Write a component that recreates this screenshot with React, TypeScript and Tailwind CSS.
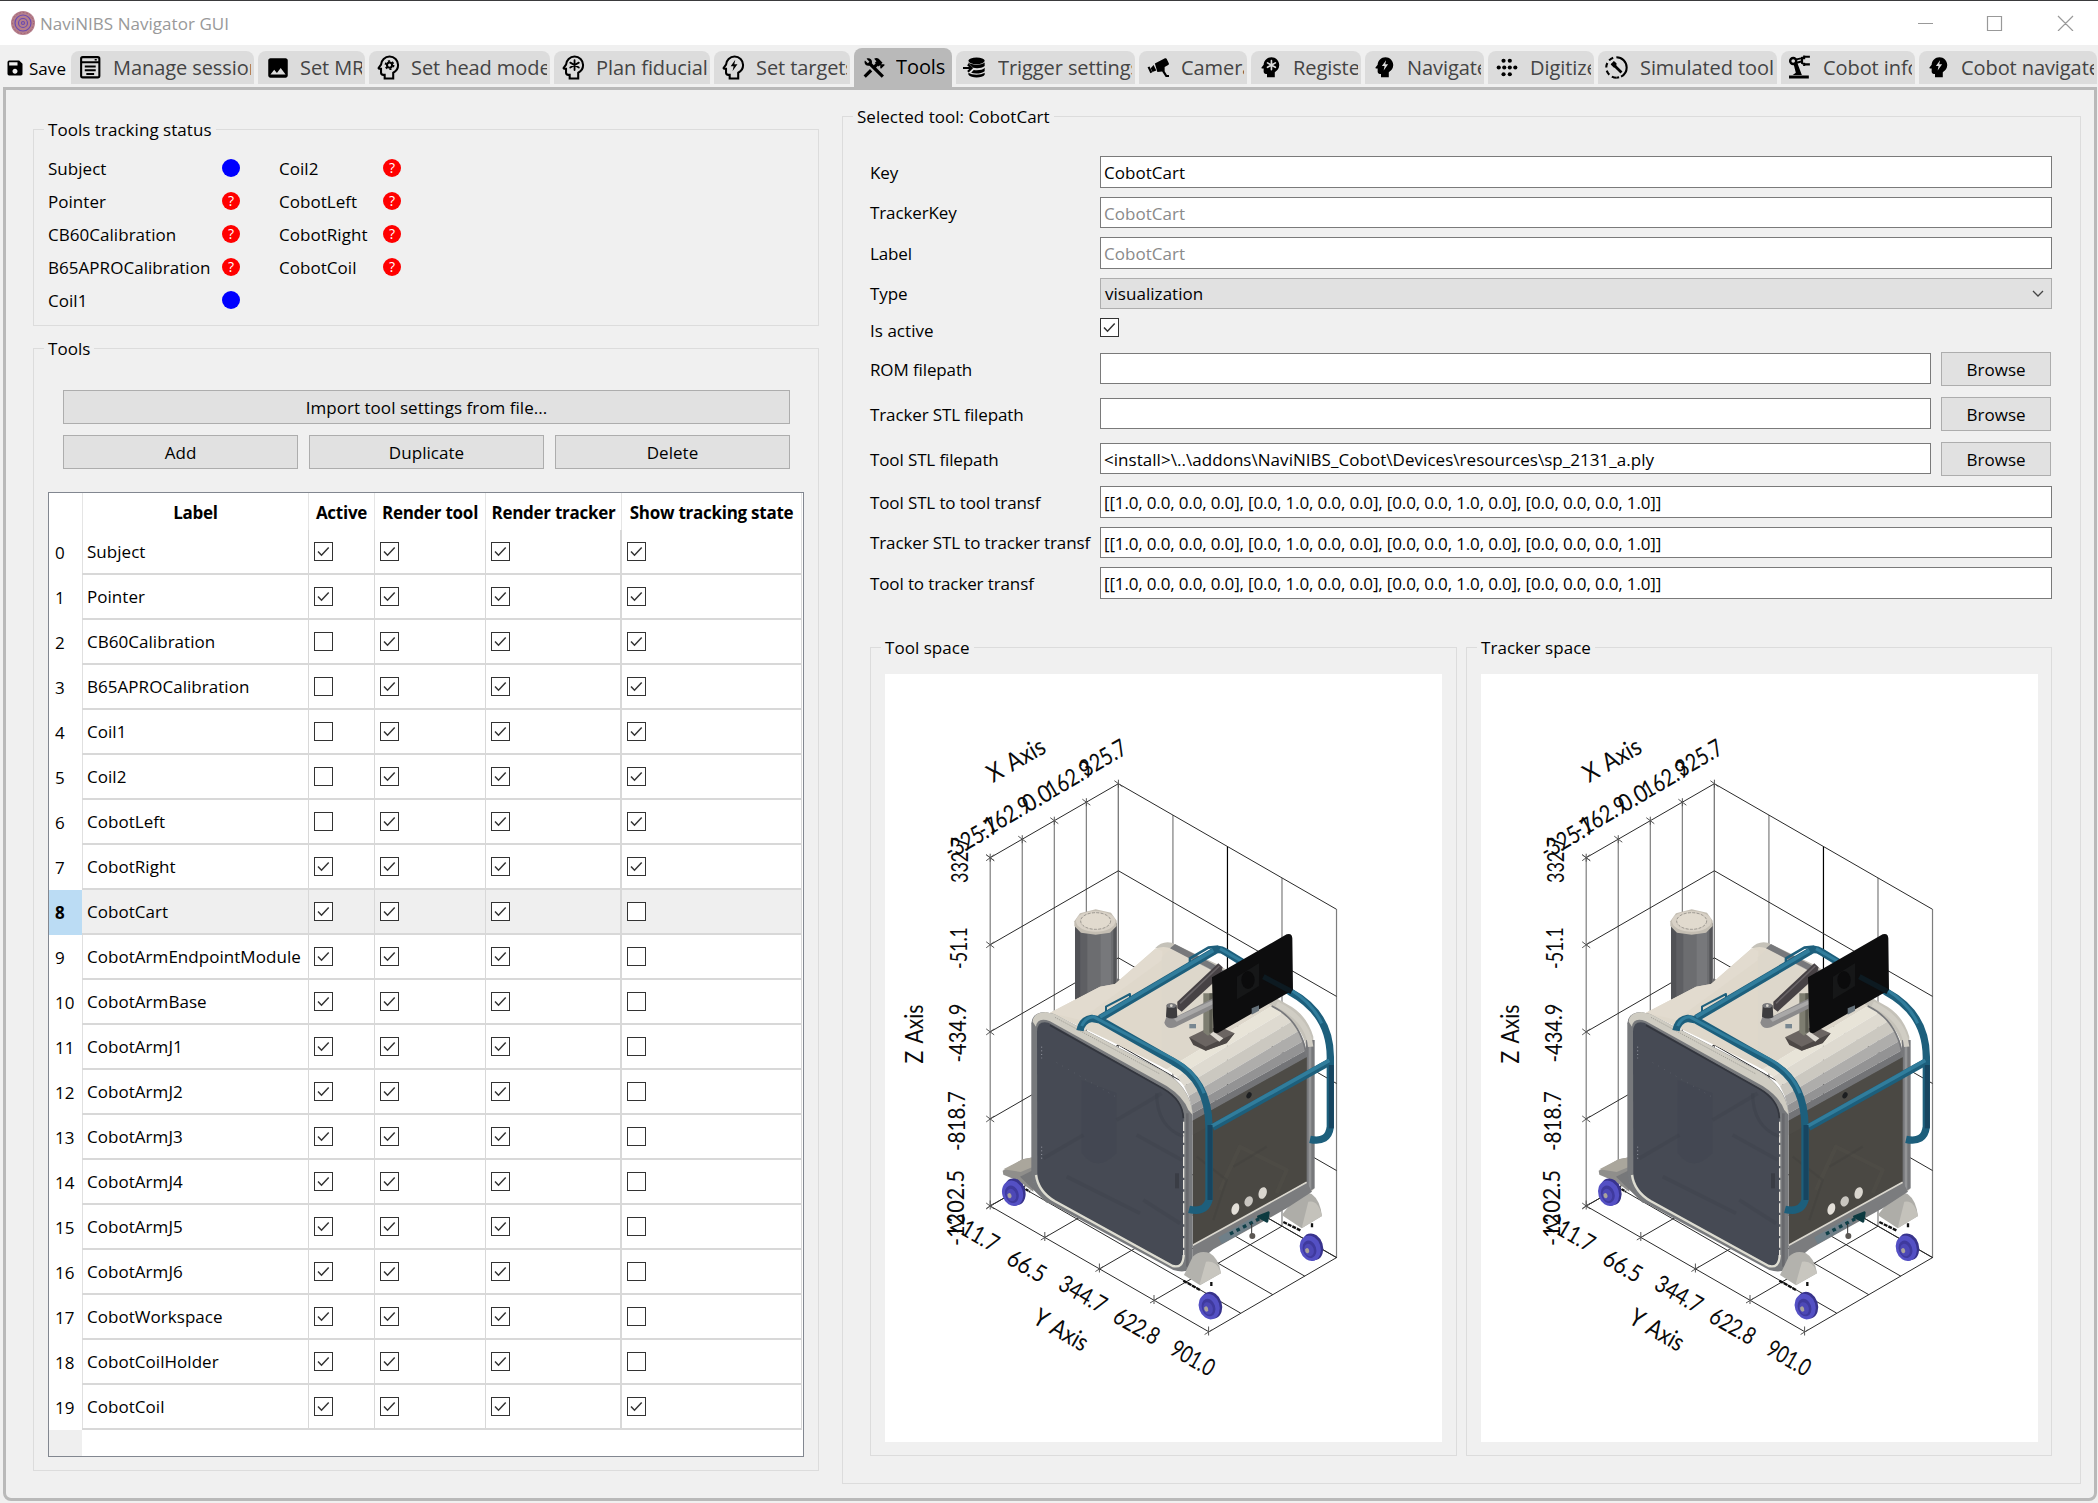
import React from "react";
import { MdImage, MdSave } from "react-icons/md";

const HEAD =
  "M13 3C9.23 3 6.19 5.95 6 9.66L4.08 12.19C3.84 12.5 4.08 13 4.5 13H6V16C6 17.11 6.89 18 8 18H9V21H16V16.31C18.37 15.19 20 12.8 20 10C20 6.14 16.88 3 13 3Z";
const BOLT = "M13.6 5.6L9.8 10.9H12.2L11.4 14.8L15.4 9.3H12.8Z";

type IconKind =
  | "form" | "image" | "headCog" | "headFlake" | "headFlash" | "tools" | "trigger"
  | "camera" | "headFlakeSolid" | "headFlashSolid" | "dots" | "simulated" | "robot";

function Star({ color }: { color: string }) {
  return (
    <g stroke={color} strokeWidth={1.5} strokeLinecap="round">
      <path d="M13 6v8M9.5 8l7 4M9.5 12l7-4" />
    </g>
  );
}

function TabIcon({ kind }: { kind: IconKind }) {
  if (kind === "image") return <MdImage className="size-[26px] text-black" />;
  return (
    <svg viewBox="0 0 24 24" className="size-[25px] overflow-visible" fill="#000">
      {kind === "form" && (
        <g fill="none" stroke="#000" strokeWidth={2}>
          <rect x="3" y="2" width="17.500" height="19.500" rx="1.500" />
          <path d="M3 7h17.500M6.500 11h10.500M6.500 14.600h10.500M8 18.200h7.500" />
          <path d="M16 4.500h2" strokeWidth={1.400} />
        </g>
      )}
      {(kind === "headCog" || kind === "headFlake" || kind === "headFlash") && (
        <g transform="translate(-2.2 -2) scale(1.17)">
          <path d={HEAD} fill="none" stroke="#000" strokeWidth={1.700} />
          {kind === "headCog" && (
            <g fill="none" stroke="#000">
              <circle cx="13" cy="10" r="2.1" strokeWidth={1.700} />
              <circle cx="13" cy="10" r="3.4" strokeWidth={1.300} strokeDasharray="1.78 1.78" />
            </g>
          )}
          {kind === "headFlake" && <Star color="#000" />}
          {kind === "headFlash" && <path d={BOLT} />}
        </g>
      )}
      {kind === "headFlakeSolid" && (
        <g transform="translate(-1 -1) scale(1.07)">
          <path d={HEAD} />
          <Star color="#ddd" />
        </g>
      )}
      {kind === "headFlashSolid" && (
        <g transform="translate(-1 -1) scale(1.07)">
          <path d={HEAD} />
          <path d={BOLT} fill="#ddd" />
        </g>
      )}
      {kind === "tools" && (
        <path
          transform="translate(25 0) scale(-1.03 1.03)"
          d="M13.78 15.3L19.78 21.3L21.89 19.14L15.89 13.14L13.78 15.3M17.5 10.1C17.11 10.1 16.69 10.05 16.36 9.91L4.97 21.25L2.86 19.14L10.27 11.74L8.5 9.96L7.78 10.66L6.33 9.25V12.11L5.63 12.81L2.11 9.25L2.81 8.55H5.62L4.22 7.14L7.78 3.58C8.95 2.41 10.83 2.41 12 3.58L9.89 5.74L11.3 7.14L10.59 7.85L12.38 9.63L14.2 7.75C14.06 7.42 14 7 14 6.63C14 4.66 15.56 3.11 17.5 3.11C18.09 3.11 18.61 3.25 19.08 3.53L16.41 6.2L17.91 7.7L20.58 5.03C20.86 5.5 21 6 21 6.63C21 8.55 19.45 10.1 17.5 10.1Z"
        />
      )}
      {kind === "trigger" && (
        <g transform="translate(-1.500 0)">
          <ellipse cx="14.500" cy="5.600" rx="7.800" ry="3.300" />
          <path d="M22.300 7.200v3.300c-2.500 2.300-7.500 2.500-11 1.800l-3.200-3.300-1.400-.8v-1c2.500 2.600 12 3 15.600 0z" />
          <path d="M22.300 12.200v3.300c-3 2.500-9 2.700-13 1.600l2.500-2.700c4 .6 8.500 0 10.500-2.200z" />
          <path d="M22.300 17v2c-2 3.400-13 3.700-15.600 0v-2c3.500 2.500 12 2.500 15.600 0z" />
          <path d="M1.500 12.500h8M6.200 9l3.600 3.500L6.200 16" fill="none" stroke="#000" strokeWidth={2.100} />
        </g>
      )}
      {kind === "camera" && (
        <g>
          <path d="M8.500 8.200L18.200 3.200c.8-.4 1.400-.1 1.700.6l2 4.200c.3.700 0 1.300-.6 1.600l-3.400 1.800v4.200l2.200 3.600h2v1.900h-3.200l-3.400-5.200-4.600.4z" />
          <path d="M7.300 9.600l2.600 5.200-3.700 1.600-1.700-3.600z" />
          <path d="M1.500 11.800l1.900-.8 2.700 5.500-1.900 1z" />
        </g>
      )}
      {kind === "dots" && (
        <g transform="translate(0 .5)">
          {[[8.200, 5], [14.200, 5], [3.600, 11.500], [8.900, 11.500], [14.200, 11.500], [19.500, 11.500], [8.200, 18], [14.200, 18]].map(([x, y]) => (
            <circle key={`${x}-${y}`} cx={x} cy={y} r={2} />
          ))}
        </g>
      )}
      {kind === "simulated" && (
        <g fill="none" stroke="#000" transform="translate(-1 0)">
          <path d="M12 2.200a9.800 9.800 0 0 1 0 19.600" strokeWidth={2} strokeDasharray="26 2 5 0" />
          <path d="M12 21.800a9.800 9.800 0 0 1 0-19.600" strokeWidth={2} strokeDasharray="4.600 3" />
          <path d="M10.500 10.500l6.300 6.300" strokeWidth={2.600} />
          <path d="M7 8.500l2.800 2.800a3 3 0 0 0 1.500-3L9 6.300" fill="#000" strokeWidth={1.600} />
        </g>
      )}
      {kind === "robot" && (
        <g transform="translate(-1 -.5)">
          <path d="M2 20.200h19v2.800H2z" />
          <path d="M5.500 19.800l3-2.200L6.300 9l3.500-1.200 4.500 12z" />
          <circle cx="6" cy="6.300" r="2.900" fill="none" stroke="#000" strokeWidth={2.300} />
          <path d="M8 5l5.500-1.300M8.500 8.200l6-1.700" stroke="#000" strokeWidth={1.800} />
          <path d="M22 2.200h-4.500l-3 1v5l3 1.300H22M16.500 1v3.500M16.500 8v3" stroke="#000" strokeWidth={2} fill="none" />
        </g>
      )}
    </svg>
  );
}

const TABS: { label: string; icon: IconKind; w: string; active?: boolean }[] = [
  { label: "Manage session", icon: "form", w: "w-[183px]" },
  { label: "Set MRI", icon: "image", w: "w-[107px]" },
  { label: "Set head model", icon: "headCog", w: "w-[181px]" },
  { label: "Plan fiducials", icon: "headFlake", w: "w-[156px]" },
  { label: "Set targets", icon: "headFlash", w: "w-[136px]" },
  { label: "Tools", icon: "tools", w: "w-[98px]", active: true },
  { label: "Trigger settings", icon: "trigger", w: "w-[179px]" },
  { label: "Cameras", icon: "camera", w: "w-[108px]" },
  { label: "Register", icon: "headFlakeSolid", w: "w-[110px]" },
  { label: "Navigate", icon: "headFlashSolid", w: "w-[119px]" },
  { label: "Digitize", icon: "dots", w: "w-[106px]" },
  { label: "Simulated tools", icon: "simulated", w: "w-[179px]" },
  { label: "Cobot info", icon: "robot", w: "w-[134px]" },
  { label: "Cobot navigate", icon: "headFlashSolid", w: "w-[178px]" },
];

function Group({ title, className, children }: { title: string; className: string; children: React.ReactNode }) {
  return (
    <section className={`relative border border-[#dcdcdc] ${className}`}>
      <h2 className="absolute -top-3 left-[10px] bg-[#f0f0f0] px-1 leading-6 whitespace-nowrap">{title}</h2>
      {children}
    </section>
  );
}

function Check({ on }: { on: boolean }) {
  return (
    <span className="flex size-[19px] shrink-0 items-center justify-center border border-[#333] bg-white">
      {on && (
        <svg viewBox="0 0 17 17" className="size-[17px]" fill="none" stroke="#333" strokeWidth={1.500}>
          <path d="M3 8.500l3.500 3.700L13.700 4.500" />
        </svg>
      )}
    </span>
  );
}

function Status({ name, ok }: { name: string; ok: boolean }) {
  return (
    <div className="flex h-[33px] items-center justify-between">
      <span>{name}</span>
      {ok ? (
        <span className="mb-px size-[18px] rounded-full bg-[#0000ff]" />
      ) : (
        <span className="mb-px flex size-[18px] items-center justify-center rounded-full bg-[#ff0000] text-[14px] leading-none text-white">?</span>
      )}
    </div>
  );
}

function Button({ children, className }: { children: React.ReactNode; className: string }) {
  return (
    <button className={`flex h-[34px] items-center justify-center border border-[#adadad] bg-[#e1e1e1] pt-px ${className}`}>
      {children}
    </button>
  );
}

const ROWS: [string, number, number][] = [
  ["Subject", 1, 1], ["Pointer", 1, 1], ["CB60Calibration", 0, 1], ["B65APROCalibration", 0, 1],
  ["Coil1", 0, 1], ["Coil2", 0, 1], ["CobotLeft", 0, 1], ["CobotRight", 1, 1], ["CobotCart", 1, 0],
  ["CobotArmEndpointModule", 1, 0], ["CobotArmBase", 1, 0], ["CobotArmJ1", 1, 0], ["CobotArmJ2", 1, 0],
  ["CobotArmJ3", 1, 0], ["CobotArmJ4", 1, 0], ["CobotArmJ5", 1, 0], ["CobotArmJ6", 1, 0],
  ["CobotWorkspace", 1, 0], ["CobotCoilHolder", 1, 0], ["CobotCoil", 1, 1],
];

const COLS = "grid grid-cols-[34px_226px_66px_111px_136px_180px]";

function ToolsTable() {
  return (
    <div className="flex h-[965px] w-[756px] flex-col border border-[#828790] bg-white">
      <div className={`${COLS} h-[37px] font-bold tracking-[-0.26px]`}>
        {["", "Label", "Active", "Render tool", "Render tracker", "Show tracking state"].map((h) => (
          <div key={h} className="flex items-center justify-center border-r border-[#e5e5e5] pt-0.5 whitespace-nowrap">{h}</div>
        ))}
      </div>
      {ROWS.map(([name, active, show], i) => {
        const sel = i === 8;
        const cell = `flex items-center border-r border-b-2 border-[#d8d8d8] pl-[5px] ${sel ? "bg-[#efefef]" : ""}`;
        return (
          <div key={name} className={`${COLS} h-[45px]`}>
            <div className={`flex items-center border-r border-[#e0e0e0] pl-1.5 ${sel ? "bg-[#bbdcf4] font-bold" : ""}`}>{i}</div>
            <div className={`${cell} -ml-px`}>{name}</div>
            <div className={cell}><Check on={!!active} /></div>
            <div className={cell}><Check on /></div>
            <div className={`${cell} border-r-2`}><Check on /></div>
            <div className={cell}><Check on={!!show} /></div>
          </div>
        );
      })}
      <div className="w-[33px] flex-1 bg-[#efefef]" />
    </div>
  );
}

function Row({ label, className, children }: { label: string; className: string; children: React.ReactNode }) {
  return (
    <div className={`flex items-center ${className}`}>
      <label className="w-[230px] shrink-0 pt-px tracking-[-0.12px] whitespace-nowrap">{label}</label>
      {children}
    </div>
  );
}

function Field({ value, className, muted }: { value: string; className: string; muted?: boolean }) {
  return (
    <div className={`flex items-center border border-[#7a7a7a] bg-white pt-0.5 pl-[3px] whitespace-nowrap ${muted ? "text-[#8a8a8a]" : ""} ${className}`}>
      {value}
    </div>
  );
}

const ID = "[[1.0, 0.0, 0.0, 0.0], [0.0, 1.0, 0.0, 0.0], [0.0, 0.0, 1.0, 0.0], [0.0, 0.0, 0.0, 1.0]]";

/* Tick and axis captions: text, centre x, centre y, rotation, length, size */
const CAPTIONS: [string, number, number, number, number, number][] = [
  ["X Axis", 131, 86, -30, 63, 25],
  ["325.7", 218, 84, -30, 50, 24],
  ["162.9", 184, 105, -30, 50, 24],
  ["0.0", 152, 124, -30, 30, 24],
  ["-162.9", 119, 143, -30, 58, 24],
  ["-325.7", 86, 164, -30, 58, 24],
  ["332.7", 74, 186, -90, 46, 24],
  ["-51.1", 73, 274, -90, 42, 24],
  ["-434.9", 72, 359, -90, 59, 24],
  ["-818.7", 71, 447, -90, 60, 24],
  ["-1202.5", 70, 534, -90, 76, 24],
  ["Z Axis", 29, 360, -90, 59, 25],
  ["-211.7", 87, 557, 30, 58, 24],
  ["66.5", 142, 592, 30, 41, 24],
  ["344.7", 198, 620, 30, 51, 24],
  ["622.8", 252, 652, 30, 49, 24],
  ["901.0", 308, 684, 30, 47, 24],
  ["Y Axis", 176, 656, 30, 59, 25],
];

const Q = [0, 1, 2, 3, 4];

function Axes() {
  const lx = (k: number) => 105.200 + k * 32.050;
  const ly = (k: number) => 183.700 - k * 18.500;
  const rx = (k: number) => 233.400 + k * 54.530;
  const ry = (k: number) => 109.700 + k * 31.400;
  return (
    <g>
      <g stroke="#7d7d7d" strokeWidth={1.200}>
        {Q.map((k) => <line key={k} x1={lx(k)} y1={ly(k)} x2={lx(k)} y2={ly(k) + 348.300} />)}
        {Q.map((k) => <line key={k} x1={rx(k)} y1={ry(k)} x2={rx(k)} y2={ry(k) + 348.300} stroke={k === 2 ? "#000" : "#7d7d7d"} />)}
      </g>
      <g stroke="#2a2a2a" strokeWidth={1}>
        {Q.map((k) => (
          <polyline key={k} fill="none" points={`105.2,${183.700 + k * 87.080} 233.4,${109.700 + k * 87.080} 451.5,${235.300 + k * 87.080}`} />
        ))}
        {Q.map((k) => <line key={k} x1={lx(k)} y1={ly(k) + 348.300} x2={lx(k) + 218.500} y2={ly(k) + 474} />)}
        {Q.map((k) => <line key={k} x1={105.200 + k * 54.600} y1={532 + k * 31.500} x2={233.400 + k * 54.530} y2={458 + k * 31.400} />)}
      </g>
      <g stroke="#555" strokeWidth={1}>
        {Q.map((k) => <path key={k} d={`M${lx(k) - 4} ${ly(k) - 3}l8 6M${lx(k)} ${ly(k) - 4}v8`} />)}
        {Q.map((k) => <path key={k} d={`M101.200 ${180.700 + k * 87.080}l8 6m-8 0l8 -6`} />)}
        {Q.map((k) => <path key={k} d={`M${101.200 + k * 54.600} ${534.500 + k * 31.500}l8 -5m-4 -3v9`} />)}
      </g>
      <g fontFamily="Lato, sans-serif" fill="#0a0a0a" letterSpacing="0" wordSpacing="3">
        {CAPTIONS.map(([t, x, y, a, len, size]) => (
          <text key={t} transform={`translate(${x} ${y}) rotate(${a})`} y={8.500} textAnchor="middle" fontSize={size} textLength={len} lengthAdjust="spacingAndGlyphs">
            {t}
          </text>
        ))}
      </g>
    </g>
  );
}

function Wheel({ x, y }: { x: number; y: number }) {
  return (
    <g transform={`translate(${x} ${y}) rotate(-18)`}>
      <ellipse cx="5" cy="0" rx="31" ry="41" fill="#38338c" />
      <ellipse cx="-3" cy="2" rx="31" ry="39" fill="#5450c4" />
      <ellipse cx="-6" cy="4" rx="20" ry="27" fill="#3f3a9e" />
      <ellipse cx="-8" cy="6" rx="14" ry="19" fill="#4d48b6" />
      <ellipse cx="-14" cy="6" rx="6" ry="8" fill="#aaa39b" />
    </g>
  );
}

const TOP_EDGE: [number, number][] = [[500, 568], [530, 590], [552, 618], [566, 648], [574, 676], [578, 700], [578, 727]];
const BACK_EDGE: [number, number][] = [[815, 378], [848, 398], [876, 424], [897, 452], [911, 482], [919, 510], [921, 535]];
const BANDS = ["#e8e4d8", "#dedad0", "#cbc8c0", "#aeadab", "#939394", "#737477"];

function Cart() {
  return (
    <g transform="translate(115 206) scale(.33333)" strokeLinejoin="round">
      {/* rear post */}
      <path d="M225 128V370H350V128Z" fill="#6c6d70" />
      <path d="M225 128V370H242V128Z" fill="#515256" />
      <path d="M242 140V370H262V140Z" fill="#5e5f63" />
      <path d="M302 140V370H333V140Z" fill="#77787b" />
      <path d="M340 130V320H350V130Z" fill="#535457" />
      <path d="M223 124L240 100L287 88L333 98L350 122V138L330 158L287 164L243 158L223 138Z" fill="#c4beb3" />
      <ellipse cx="287" cy="124" rx="59" ry="31" fill="#d8d1c6" />
      <ellipse cx="287" cy="123" rx="45" ry="25" fill="#e1dace" stroke="#8e8a84" strokeWidth="2.500" strokeDasharray="9 4" />
      <path d="M350 295l12 5v16l-12 4z" fill="#6a6a6c" />

      {/* feet and casters */}
      <path d="M8 872L68 838L100 832V935L60 905L10 884Z" fill="#8f8e8b" />
      <path d="M10 868L68 838L100 832V860L62 876Z" fill="#aaa69c" />
      <path d="M60 890L100 870V905L130 950L160 972L140 968Z" fill="#77787a" />
      <path d="M35 905L90 935" stroke="#151515" strokeWidth="7" strokeDasharray="9 3" />
      <Wheel x={40} y={937} />
      <path d="M845 1005L890 950Q910 932 935 942Q960 960 966 1008L905 1045Z" fill="#aeada8" />
      <path d="M905 1045L925 965Q955 958 966 1008Z" fill="#c4c2bb" />
      <path d="M850 1026L903 1052M936 1030v14" stroke="#111" strokeWidth="7" strokeDasharray="12 3" />
      <Wheel x={933} y={1102} />

      {/* rear frame and shell */}
      <path d="M465 205Q485 182 515 188L650 252L860 372Q920 402 940 470V930L918 940V500Q905 440 850 405L640 275L500 205Z" fill="#c5c2b9" />
      <path d="M918 480H944V925L918 940Z" fill="#77787b" />
      <path d="M926 480H934V930H926Z" fill="#939496" />
      <path d="M150 398L300 320L345 312L466 206Q490 196 515 206L815 378L500 568Q330 480 150 398Z" fill="#dfd8cb" />
      <path d="M150 398L300 320L345 312L466 206L487 212V240L240 420Z" fill="#e2dbcf" />
      <path d="M485 232V560L500 568L815 378L640 276L515 206Z" fill="#ddd7cb" />
      <path d="M525 192L640 252L700 290L690 300L620 262L510 205Z" fill="#77787b" />
      {BANDS.map((c, i) => (
        <polygon key={c} fill={c} points={[TOP_EDGE[i], BACK_EDGE[i], BACK_EDGE[i + 1], TOP_EDGE[i + 1]].map((p) => p.join(",")).join(" ")} />
      ))}
      <path d="M815 378Q905 420 921 535" fill="none" stroke="#77787b" strokeWidth="5" />
      <path d="M830 372Q925 420 932 500" fill="none" stroke="#d0cdc4" strokeWidth="16" />

      {/* side panel */}
      <path d="M578 722L920 532V906L578 1098Z" fill="#4a4843" />
      <path d="M578 722L920 532V575L578 765Z" fill="#504e49" opacity=".6" />
      <path d="M660 930L720 800L860 870L830 940" fill="none" stroke="#55524c" strokeWidth="12" opacity=".3" />
      <path d="M590 830L680 900L640 1020M700 860L800 800" fill="none" stroke="#403f3b" strokeWidth="7" opacity=".35" />
      <path d="M578 1095L920 906L936 935L860 985L640 1108L578 1160Z" fill="#7b7c7e" />
      <path d="M578 1096L920 907" stroke="#dad7ce" strokeWidth="5" />
      <path d="M655 1072L760 1012L770 1032L665 1092Z" fill="#6f7f88" />
      <path d="M690 1062L780 1015" stroke="#0f3f48" strokeWidth="10" strokeDasharray="11 11" />
      <path d="M775 1010l30 -12l-4 26z" fill="#0d3a40" stroke="#0d3a40" strokeWidth="8" />
      <path d="M755 1030V1062" stroke="#333" strokeWidth="3" />
      <circle cx="757" cy="1068" r="9" fill="#5b5753" />
      <ellipse cx="706" cy="987" rx="11" ry="18" transform="rotate(18 706 987)" fill="#e3dfd8" />
      <ellipse cx="746" cy="964" rx="12" ry="16" transform="rotate(25 746 964)" fill="#c9c6c0" />
      <ellipse cx="788" cy="939" rx="12" ry="18" transform="rotate(18 788 939)" fill="#dad6cf" />
      <ellipse cx="747" cy="646" rx="7" ry="10" transform="rotate(30 747 646)" fill="#1d1f21" />

      {/* front frame and door */}
      <path d="M94 430Q96 398 135 396L162 402L490 572Q570 620 578 700V1160Q560 1182 520 1170L150 970Q100 940 94 880Z" fill="#77797c" />
      <path d="M98 425Q100 397 137 396L165 403L490 574Q572 622 578 705L565 690Q550 650 500 618L150 424Q112 410 108 440Z" fill="#cfccc2" />
      <path d="M165 412L480 582" stroke="#8e8c87" strokeWidth="2" strokeDasharray="4 3" />
      <path d="M562 700V1160" stroke="#68696d" strokeWidth="8" />
      <path d="M111 455Q112 420 145 428L490 625Q550 660 551 715V1135Q546 1166 518 1155L165 962Q116 930 112 880Z" fill="#464a54" />
      <path d="M150 436L490 626Q549 660 550 715" fill="none" stroke="#33363e" strokeWidth="5" />
      <path d="M108 885Q115 935 165 964L518 1158Q550 1166 551 1125" fill="none" stroke="#deddd2" strokeWidth="7" />
      <path d="M551 725V1130" stroke="#e4e1da" strokeWidth="4" strokeDasharray="28 7" />
      <path d="M245 600V820Q290 880 350 820V640Z" fill="#41454f" opacity=".45" />
      <path d="M130 835L250 765M350 720L485 640M200 890L420 1000M410 765L545 840M430 960L540 1030" stroke="#3e424b" strokeWidth="11" opacity=".4" />
      <path d="M470 640Q470 740 550 770" fill="none" stroke="#3c4049" strokeWidth="9" opacity=".5" />
      <path d="M525 880h12v45h-12z" fill="#3a3d45" />
      <path d="M125 500v35M125 800v40" stroke="#999ca4" strokeWidth="3" strokeDasharray="3 8" />
      <path d="M170 548L350 652" stroke="#6b6f78" strokeWidth="2" strokeDasharray="2 18" />

      {/* front caster */}
      <path d="M552 1185L578 1130Q600 1108 630 1120Q656 1135 663 1180L600 1216Z" fill="#b3b2ad" />
      <path d="M598 1216L618 1145Q652 1140 663 1180Z" fill="#c8c6bf" />
      <path d="M550 1202L600 1230M634 1206v13" stroke="#111" strokeWidth="7" strokeDasharray="12 3" />
      <Wheel x={630} y={1277} />

      {/* monitor arm and base */}
      <path d="M567 472L612 450L660 440L704 460L680 488L617 512Z" fill="#6b6562" />
      <path d="M567 472L617 500L704 460L680 490L617 512L580 495Z" fill="#4d4846" />
      <path d="M610 340h28v115l-14 12l-14 -10z" fill="#7d7d70" />
      <path d="M628 340h10v118h-10z" fill="#5c5c52" />
      <path d="M640 455l30 20l-12 10l-28 -22z" fill="#dcd8d0" />
      <path d="M500 408L525 412L640 355V385L525 442Q500 450 493 428Z" fill="#8b8a8b" />
      <path d="M520 415L640 360V372L530 425Z" fill="#a9a8a8" />
      <path d="M500 375Q514 366 530 376L532 412Q514 420 498 410Z" fill="#3d3c3e" />
      <ellipse cx="514" cy="377" rx="14" ry="7" fill="#77777a" />
      <circle cx="514" cy="377" r="4" fill="#dcd8d0" />
      <path d="M532 365L655 250L668 262L660 290L545 395L532 385Z" fill="#474245" />
      <path d="M540 370L658 258" stroke="#686366" strokeWidth="5" />
      <path d="M568 432h20v13h-20z" fill="#788791" />

      {/* hand rails */}
      <g fill="none" strokeLinecap="butt">
        <g stroke="#1d5f7c">
          <path d="M318 400V380L390 342V362" strokeWidth="6" />
          <path d="M570 250V235L625 203L655 200" strokeWidth="8" />
          <path d="M300 415L640 215Q655 202 675 215L870 335Q990 400 991 530V740Q985 790 930 778" strokeWidth="22" />
          <path d="M240 452Q245 420 275 415L300 420L520 545Q626 600 627 740V960Q615 1000 567 988" strokeWidth="22" />
          <path d="M638 742L992 544" strokeWidth="21" />
        </g>
        <g stroke="#317d9c">
          <path d="M300 411L640 211" strokeWidth="11" />
          <path d="M660 206L870 328Q940 372 965 430" strokeWidth="9" />
          <path d="M245 438Q255 413 280 410L525 540Q590 578 612 640" strokeWidth="9" />
          <path d="M636 738L988 541" strokeWidth="11" />
        </g>
        <g stroke="#174560">
          <path d="M994 555V745" strokeWidth="15" />
          <path d="M630 735V960" strokeWidth="15" />
        </g>
      </g>

      {/* monitor */}
      <path d="M636 292L860 163Q876 158 877 175L879 330L655 458Q640 462 640 448Z" fill="#0d0d0e" />
      <path d="M711 290L777 250V318L711 358Z" fill="#161718" />
      <ellipse cx="744" cy="300" rx="20" ry="27" fill="#0b0b0c" />
      <path d="M790 290L875 335" stroke="#0d1a21" strokeWidth="16" />
      <path d="M755 385L777 376V392L755 404Z" fill="#65717a" />
    </g>
  );
}

function Scene() {
  return (
    <svg viewBox="0 0 557 768" className="h-[768px] w-[557px] bg-white">
      <Axes />
      <Cart />
    </svg>
  );
}

export default function App() {
  return (
    <div className="flex h-[1503px] w-[2098px] flex-col overflow-hidden bg-[#f0f0f0] font-['Open_Sans',sans-serif] text-[17px] leading-6 tracking-[0.04px] text-black">
      <header className="flex h-[45px] shrink-0 items-center border-t border-[#3a3a3c] bg-white pl-[11px]">
        <svg viewBox="0 0 24 24" className="size-6" fill="none">
          <circle cx="12" cy="12" r="12" fill="#b57f8c" />
          <g stroke="#6a4ab0" strokeWidth={1.200}>
            <circle cx="12" cy="12" r="8" />
            <circle cx="12" cy="12" r="4.500" />
            <circle cx="12" cy="12" r="1.500" />
          </g>
          <circle cx="12" cy="12" r="10.500" stroke="#a0606e" strokeDasharray="1.500 2" />
        </svg>
        <h1 className="ml-[5px] flex-1 pt-px text-[#999]">NaviNIBS Navigator GUI</h1>
        <svg viewBox="0 0 156 16" className="mr-[24px] h-4 w-[156px]" fill="none" stroke="#999" strokeWidth={1.200}>
          <path d="M0 8.500h15M69.500 1.500h14v14h-14zM140 1l15 15M155 1l-15 15" />
        </svg>
      </header>

      <nav className="flex h-[42px] shrink-0 items-end">
        <div className="flex h-[37px] w-[71px] shrink-0 items-center pb-px pl-[5px]">
          <MdSave className="size-5" />
          <span className="ml-1 pt-px">Save</span>
        </div>
        <div className="flex h-full gap-1">
          {TABS.map((t) => (
            <div
              key={t.label}
              className={`flex shrink-0 items-center overflow-hidden rounded-t-lg pr-[3px] pl-[7px] text-[20px] tracking-[-0.08px] ${t.w} ${
                t.active ? "mt-[3px] h-[39px] bg-[#b9b9b9] pb-px text-black" : "mt-[6px] h-[33px] bg-[#dcdcdc] text-[#444]"
              }`}
            >
              <span className="flex w-[35px] shrink-0 items-center"><TabIcon kind={t.icon} /></span>
              <span className="flex-1 overflow-hidden whitespace-nowrap">{t.label}</span>
            </div>
          ))}
        </div>
      </nav>

      <main className="mr-px mb-0.5 ml-[3px] flex flex-1 rounded-b-lg border-[3px] border-[#b9b9b9] pl-[27px]">
        <div className="w-[786px] shrink-0 pt-[39px]">
          <Group title="Tools tracking status" className="h-[197px] pt-[22px] pl-[14px]">
            <div className="flex gap-[39px]">
              <div className="w-[192px]">
                <Status name="Subject" ok />
                <Status name="Pointer" ok={false} />
                <Status name="CB60Calibration" ok={false} />
                <Status name="B65APROCalibration" ok={false} />
                <Status name="Coil1" ok />
              </div>
              <div className="w-[122px]">
                <Status name="Coil2" ok={false} />
                <Status name="CobotLeft" ok={false} />
                <Status name="CobotRight" ok={false} />
                <Status name="CobotCoil" ok={false} />
              </div>
            </div>
          </Group>
          <Group title="Tools" className="mt-[22px] h-[1123px] pt-[41px] pl-[14px]">
            <div className="mb-[23px] ml-[15px] flex w-[727px] flex-col gap-[11px]">
              <Button className="w-full">Import tool settings from file...</Button>
              <div className="grid grid-cols-3 gap-[11px]">
                <Button className="">Add</Button>
                <Button className="">Duplicate</Button>
                <Button className="">Delete</Button>
              </div>
            </div>
            <ToolsTable />
          </Group>
        </div>

        <div className="ml-[23px] pt-[26px]">
          <Group title="Selected tool: CobotCart" className="h-[1368px] w-[1239px] pt-[39px] pl-[27px]">
            <Row label="Key" className="h-8"><Field value="CobotCart" className="h-8 w-[952px]" /></Row>
            <Row label="TrackerKey" className="mt-[9px] h-[31px]"><Field muted value="CobotCart" className="h-[31px] w-[952px]" /></Row>
            <Row label="Label" className="mt-[9px] h-8"><Field muted value="CobotCart" className="h-8 w-[952px]" /></Row>
            <Row label="Type" className="mt-[9px] h-[31px]">
              <div className="flex h-[31px] w-[952px] items-center justify-between border border-[#adadad] bg-[#e1e1e1] pt-px pr-[7px] pl-1">
                visualization
                <svg viewBox="0 0 12 12" className="size-3" fill="none" stroke="#444" strokeWidth={1.300}>
                  <path d="M1 3l5 5 5-5" />
                </svg>
              </div>
            </Row>
            <div className="mt-[9px] flex h-[19px]">
              <span className="w-[230px] pt-px">Is active</span>
              <Check on />
            </div>
            <div className="mt-[15px] flex flex-col gap-[11px]">
              {[
                ["ROM filepath", ""],
                ["Tracker STL filepath", ""],
                ["Tool STL filepath", "<install>\\..\\addons\\NaviNIBS_Cobot\\Devices\\resources\\sp_2131_a.ply"],
              ].map(([l, v]) => (
                <Row key={l} label={l} className="h-[34px]">
                  <Field value={v} className="mb-px h-[31px] w-[831px] pl-1" />
                  <Button className="ml-[10px] w-[110px]">Browse</Button>
                </Row>
              ))}
            </div>
            <div className="tracking-[-0.15px]">
              <Row label="Tool STL to tool transf" className="mt-[10px] h-8"><Field value={ID} className="h-8 w-[952px] pl-1" /></Row>
              <Row label="Tracker STL to tracker transf" className="mt-[9px] h-[31px]"><Field value={ID} className="h-[31px] w-[952px] pl-1" /></Row>
              <Row label="Tool to tracker transf" className="mt-[9px] h-8"><Field value={ID} className="h-8 w-[952px] pl-1" /></Row>
            </div>
            <div className="mt-12 flex gap-[9px]">
              <Group title="Tool space" className="h-[809px] w-[587px] pt-[26px] pl-[14px]"><Scene /></Group>
              <Group title="Tracker space" className="h-[809px] w-[586px] pt-[26px] pl-[14px]"><Scene /></Group>
            </div>
          </Group>
        </div>
      </main>
    </div>
  );
}
